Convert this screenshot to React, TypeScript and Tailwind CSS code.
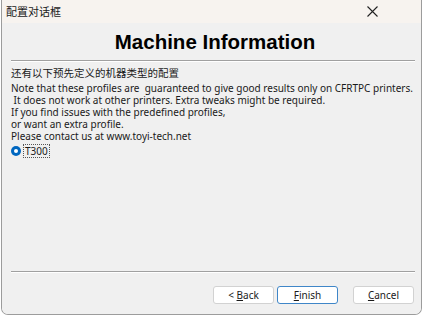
import React from "react";

const BODY_FONT = { fontFamily: '"Noto Sans", "Noto Sans CJK SC", sans-serif' };

function Btn({ label, u, primary }: { label: string; u: number; primary?: boolean }) {
  return (
    <button
      className={`w-[61px] h-[18px] rounded-[3px] bg-white text-[10px] leading-none text-[#1a1a1a] flex items-center justify-center whitespace-pre ${
        primary ? "border border-[#3f86c8]" : "border border-[#d2d2d2]"
      }`}
    >
      {label.slice(0, u)}
      <span className="underline">{label[u]}</span>
      {label.slice(u + 1)}
    </button>
  );
}

export default function App() {
  return (
    <div className="w-[424px] h-[317px] bg-white overflow-hidden" style={BODY_FONT}>
      <div className="ml-[1px] w-[421px] h-[315px] flex flex-col border-x border-b border-[#9c9c9c] rounded-b-[7px] overflow-hidden">
        {/* title bar */}
        <div className="h-[23px] bg-[#f7f3ef] flex items-center justify-between pl-[4px] pr-[40px]">
          <span className="text-[11px] text-[#1a1a1a]" style={{ fontFamily: '"Noto Sans CJK SC", sans-serif' }}>
            配置对话框
          </span>
          <svg width="11" height="11" viewBox="0 0 11 11" className="mr-[3px]">
            <path d="M0.5 0.5 L10.5 10.5 M10.5 0.5 L0.5 10.5" stroke="#222" strokeWidth="1.1" />
          </svg>
        </div>

        {/* body */}
        <div className="flex-1 bg-[#f0f0f0] flex flex-col pl-[9px] pr-[6px]">
          <div
            className="h-[37px] pt-[2px] flex items-center justify-center pl-[4px] text-[20.5px] font-bold text-black"
            style={{ fontFamily: '"Liberation Sans", Arial, sans-serif' }}
          >
            Machine Information
          </div>
          <div className="h-[1px] bg-[#a0a0a0] border-b border-white box-content" />
          <div className="flex-1 pt-[4px] text-[#1a1a1a]">
            <div className="text-[10.5px] leading-[14px]" style={{ fontFamily: '"Noto Sans CJK SC", sans-serif' }}>
              还有以下预先定义的机器类型的配置
            </div>
            <div className="text-[10px] leading-[12px] mt-[2px] whitespace-pre">
              {"Note that these profiles are  guaranteed to give good results only on CFRTPC printers.\n It does not work at other printers. Extra tweaks might be required.\nIf you find issues with the predefined profiles,\nor want an extra profile.\nPlease contact us at www.toyi-tech.net"}
            </div>
            <div className="flex items-center mt-[2px] gap-[2px]">
              <span className="w-[10px] h-[10px] rounded-full bg-[#0067c0] flex items-center justify-center">
                <span className="w-[4px] h-[4px] rounded-full bg-white" />
              </span>
              <span className="text-[10px] leading-[12px] px-[1px] border border-dotted border-[#555]">T300</span>
            </div>
          </div>
          <div className="h-[1px] bg-[#a0a0a0] border-b border-white box-content" />
          <div className="h-[41px] flex items-center justify-end gap-[3px] pt-[2px] pr-[1px]">
            <Btn label="< Back" u={2} />
            <Btn label="Finish" u={0} primary />
            <div className="w-[9px]" />
            <Btn label="Cancel" u={0} />
          </div>
        </div>
      </div>
    </div>
  );
}
